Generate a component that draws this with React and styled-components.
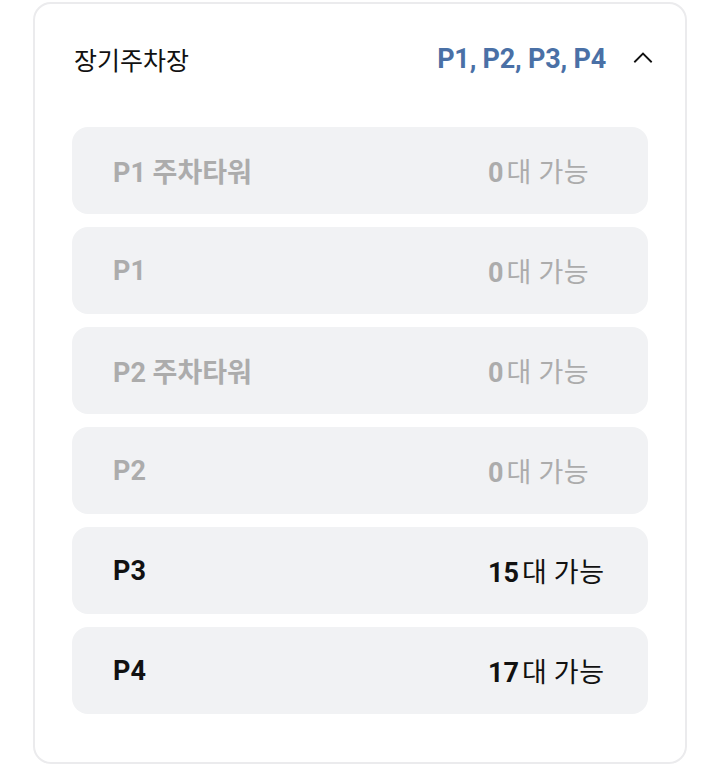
import React from "react";
import styled, { createGlobalStyle } from "styled-components";

const GlobalStyle = createGlobalStyle`
  body {
    margin: 0;
    background: #ffffff;
    font-family: Roboto, "Noto Sans CJK KR", sans-serif;
  }
`;

const Card = styled.section`
  box-sizing: border-box;
  width: 654px;
  height: 762px;
  margin: 2px 0 0 33px;
  padding: 0 37px;
  border: 2px solid #ebebed;
  border-radius: 18px;
  background: #ffffff;
`;

const Header = styled.div`
  display: flex;
  align-items: center;
  height: 110px;
  padding-left: 2px;
`;

const Title = styled.h2`
  flex: 1;
  margin: 0;
  font-family: "Noto Sans CJK KR", sans-serif;
  font-size: 25px;
  font-weight: 400;
  color: #111111;
`;

const Selected = styled.span`
  font-family: Roboto, sans-serif;
  font-size: 27px;
  font-weight: 700;
  color: #4a70a6;
  letter-spacing: -0.2px;
`;

const Chevron = styled.svg`
  width: 26px;
  height: 26px;
  margin-left: 24px;
  margin-right: -8px;
`;

const List = styled.ul`
  list-style: none;
  margin: 13px 0 0;
  padding: 0;
  display: flex;
  flex-direction: column;
  gap: 13px;
`;

const Row = styled.li`
  display: flex;
  align-items: center;
  justify-content: space-between;
  height: 87px;
  padding: 0 0 0 41px;
  border-radius: 16px;
  background: #f1f2f4;
  color: ${p => (p.$empty ? "#acacac" : "#111111")};
`;

const Name = styled.span`
  font-size: 27px;
  font-weight: 700;
`;

const Count = styled.span`
  display: flex;
  align-items: baseline;
  gap: 3px;
  width: 160px;
`;

const Num = styled.b`
  font-family: Roboto, sans-serif;
  font-size: 27px;
  font-weight: 700;
`;

const Unit = styled.span`
  font-family: "Noto Sans CJK KR", sans-serif;
  font-size: 27px;
  font-weight: 400;
  letter-spacing: 0.5px;
`;

const lots = [
  { name: "P1 주차타워", count: 0 },
  { name: "P1", count: 0 },
  { name: "P2 주차타워", count: 0 },
  { name: "P2", count: 0 },
  { name: "P3", count: 15 },
  { name: "P4", count: 17 },
];

export default function App() {
  return (
    <>
      <GlobalStyle />
      <Card>
        <Header>
          <Title>장기주차장</Title>
          <Selected>P1, P2, P3, P4</Selected>
          <Chevron viewBox="0 0 24 24" fill="none" stroke="#111" strokeWidth="1.7">
            <path d="M4 15l8-8 8 8" />
          </Chevron>
        </Header>
        <List>
          {lots.map(lot => (
            <Row key={lot.name} $empty={lot.count === 0}>
              <Name>{lot.name}</Name>
              <Count>
                <Num>{lot.count}</Num>
                <Unit>대 가능</Unit>
              </Count>
            </Row>
          ))}
        </List>
      </Card>
    </>
  );
}
